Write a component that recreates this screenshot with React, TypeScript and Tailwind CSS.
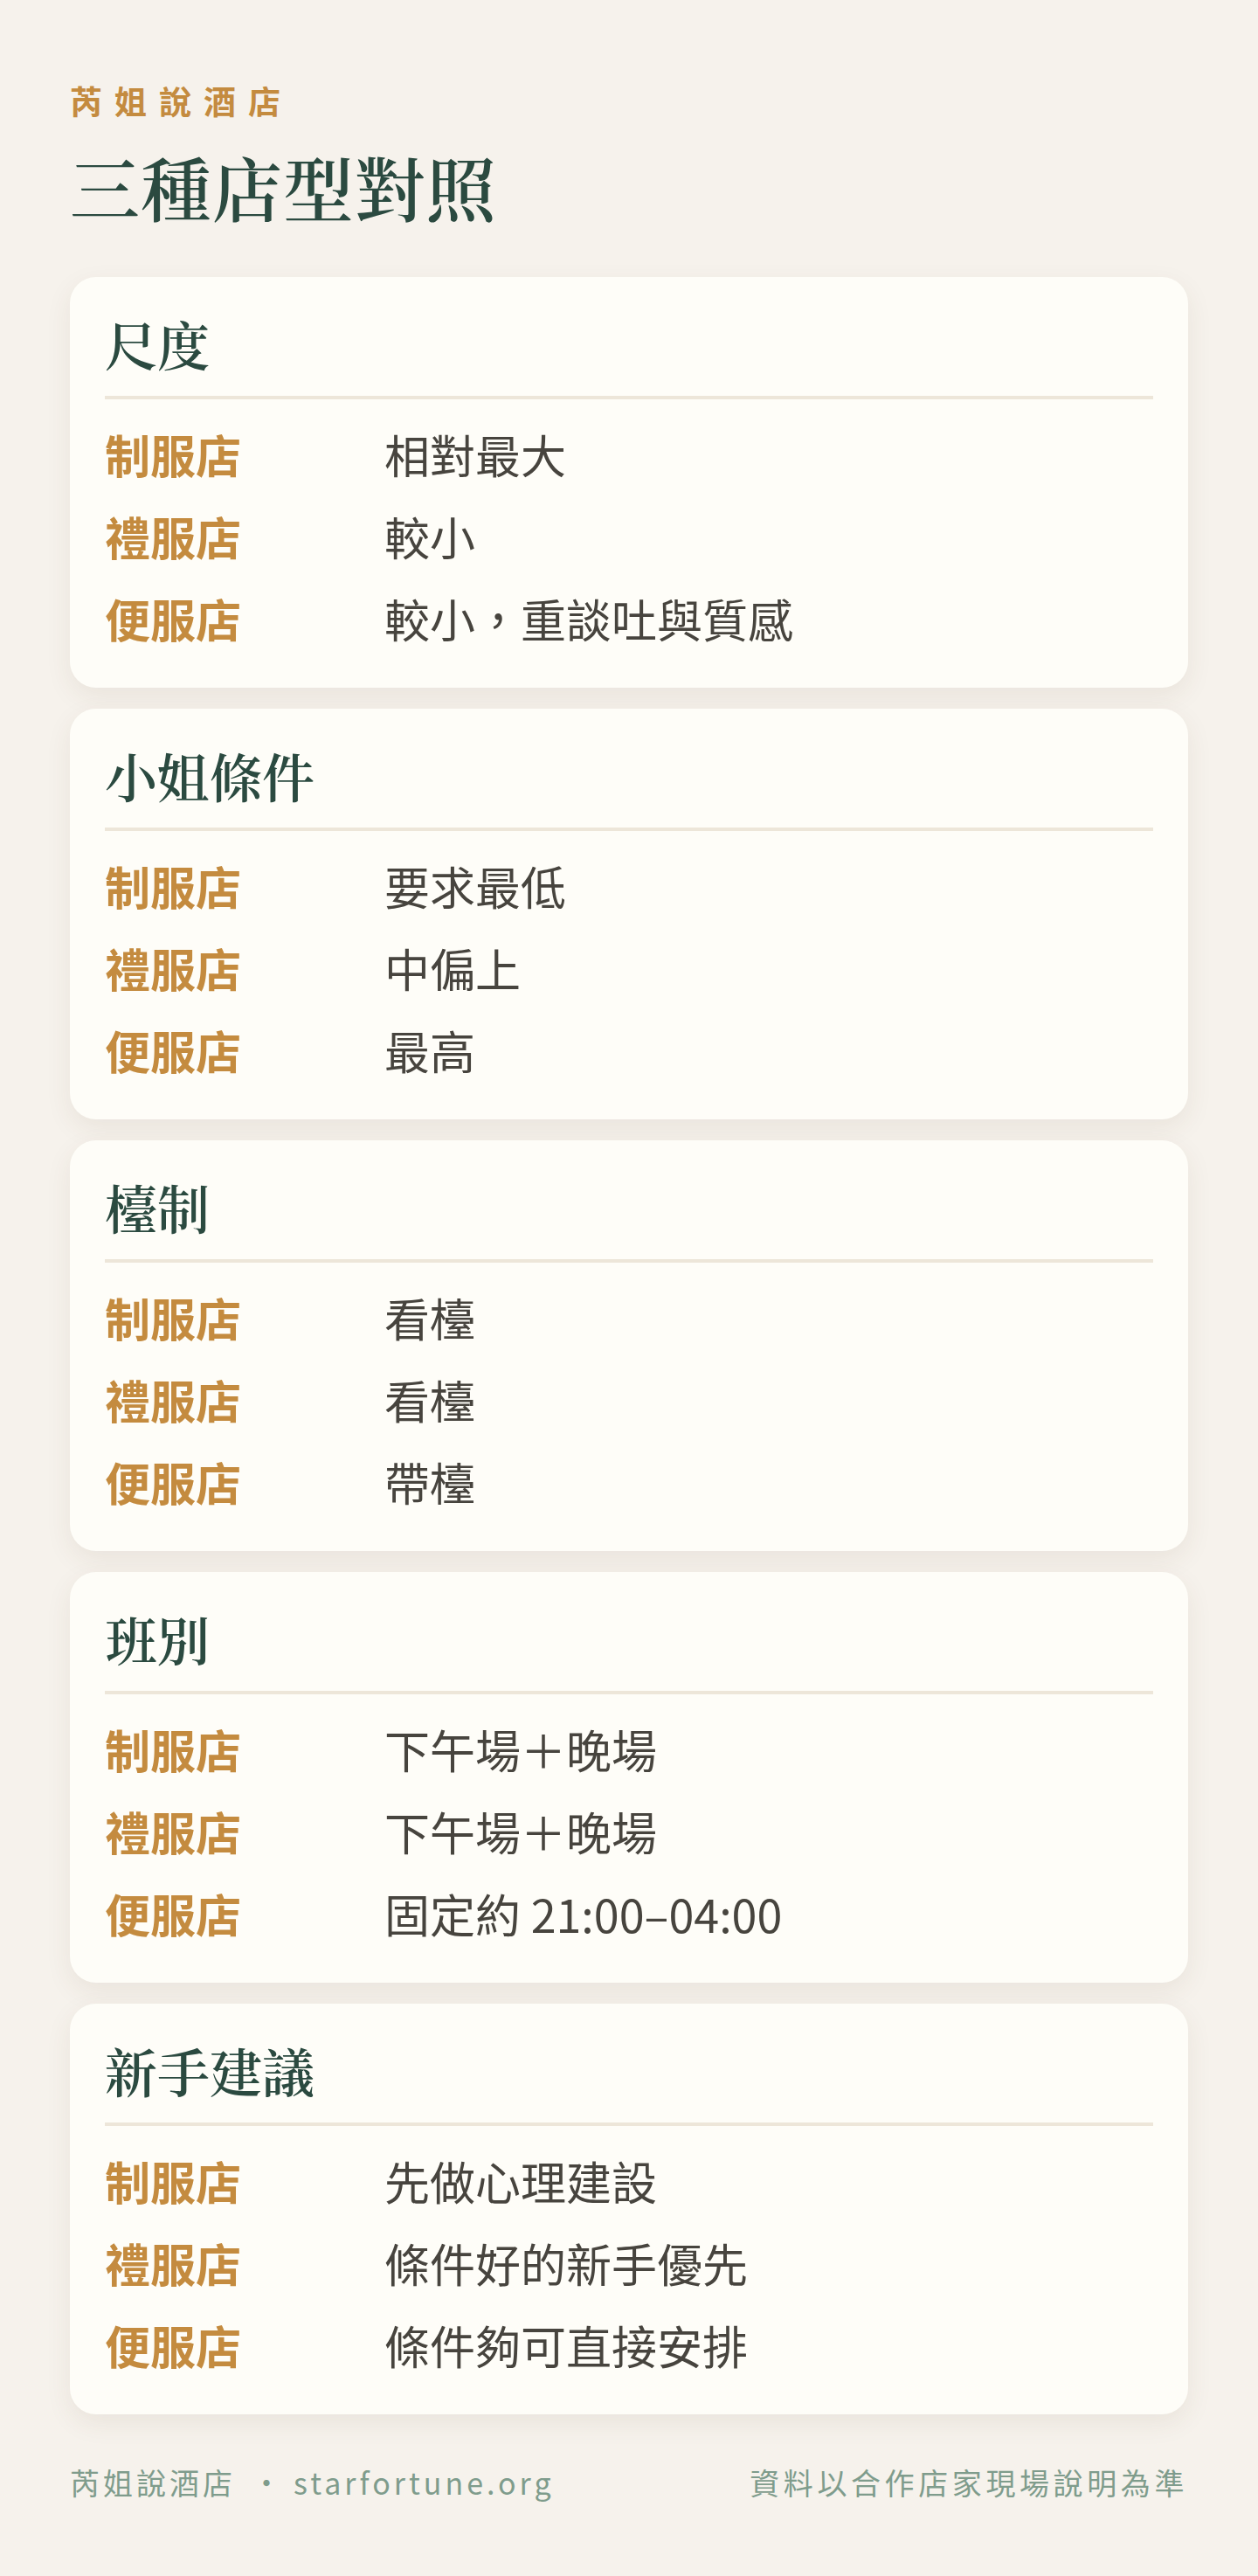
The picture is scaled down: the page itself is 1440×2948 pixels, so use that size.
import React from "react";

const cards: { title: string; rows: [string, string][] }[] = [
  {
    title: "尺度",
    rows: [
      ["制服店", "相對最大"],
      ["禮服店", "較小"],
      ["便服店", "較小，重談吐與質感"],
    ],
  },
  {
    title: "小姐條件",
    rows: [
      ["制服店", "要求最低"],
      ["禮服店", "中偏上"],
      ["便服店", "最高"],
    ],
  },
  {
    title: "檯制",
    rows: [
      ["制服店", "看檯"],
      ["禮服店", "看檯"],
      ["便服店", "帶檯"],
    ],
  },
  {
    title: "班別",
    rows: [
      ["制服店", "下午場＋晚場"],
      ["禮服店", "下午場＋晚場"],
      ["便服店", "固定約 21:00–04:00"],
    ],
  },
  {
    title: "新手建議",
    rows: [
      ["制服店", "先做心理建設"],
      ["禮服店", "條件好的新手優先"],
      ["便服店", "條件夠可直接安排"],
    ],
  },
];

export default function App() {
  return (
    <div className="min-h-[2948px] w-full bg-[#f6f2ec] px-[80px] pt-[90px] pb-[80px] font-['Noto_Sans_CJK_TC','Noto_Sans',sans-serif]">
      <div className="text-[37px] leading-[51px] font-bold tracking-[14px] text-[#c48b3f]">
        芮姐說酒店
      </div>
      <h1 className="mt-[22px] text-[80px] leading-[100px] font-semibold tracking-[1.5px] text-[#2b4a40] font-['Noto_Serif_CJK_TC','Noto_Serif_TC','Noto_Serif_CJK_JP',serif]">
        三種店型對照
      </h1>
      <div className="mt-[54px] flex flex-col gap-[24px]">
        {cards.map((c) => (
          <div
            key={c.title}
            className="rounded-[30px] bg-[#fefdf8] px-[40px] pt-[40px] pb-[40px] shadow-[0_10px_30px_rgba(90,70,40,0.08)]"
          >
            <div className="border-b-[4px] border-[#ede6d9] pb-[24px]">
              <h2 className="text-[60px] leading-[72px] font-semibold text-[#2b4a40] font-['Noto_Serif_CJK_TC','Noto_Serif_TC','Noto_Serif_CJK_JP',serif]">
                {c.title}
              </h2>
            </div>
            <div className="mt-[24px] flex flex-col gap-[16px]">
              {c.rows.map(([k, v]) => (
                <div key={k} className="flex text-[52px] leading-[78px]">
                  <div className="w-[320px] shrink-0 font-bold text-[#c48b3f]">{k}</div>
                  <div className="text-[#47443e]">{v}</div>
                </div>
              ))}
            </div>
          </div>
        ))}
      </div>
      <div className="mt-[52px] flex items-center justify-between text-[34px] leading-[51px] text-[#7f9c8c]">
        <div className="flex items-center tracking-[4px]">
          <span>芮姐說酒店</span>
          <span className="ml-[18px] mr-[10px]">•</span>
          <span>starfortune.org</span>
        </div>
        <div className="tracking-[4.6px]">資料以合作店家現場說明為準</div>
      </div>
    </div>
  );
}
